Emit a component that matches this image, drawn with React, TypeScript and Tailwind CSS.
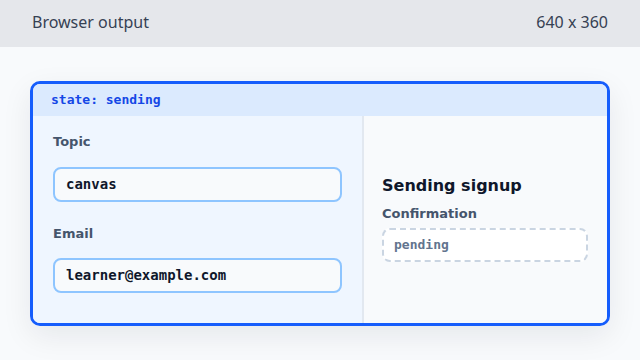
import React from "react";

const sans = "font-['DejaVu_Sans',sans-serif]";
const mono = "font-['DejaVu_Sans_Mono',monospace]";

function Field({ label, value, first }: { label: string; value: string; first?: boolean }) {
  return (
    <div className={first ? "" : "mt-6"}>
      <div className={`${sans} text-[13px] leading-4 font-bold text-slate-600`}>{label}</div>
      <div
        className={`${first ? "mt-[17px]" : "mt-4"} h-[35px] flex items-center px-[11px] border-2 border-blue-300 rounded-lg bg-slate-50 ${mono} text-[14px] font-bold text-slate-900`}
      >
        {value}
      </div>
    </div>
  );
}

export default function App() {
  return (
    <div className="w-[640px] h-[360px] flex flex-col bg-slate-50 overflow-hidden">
      <div className="h-[47px] shrink-0 flex items-center justify-between px-8 pb-1 bg-gray-200 font-['Noto_Sans',sans-serif] text-[16px] text-gray-700">
        <span>Browser output</span>
        <span>640 x 360</span>
      </div>
      <div className="flex-1 flex items-center px-[30px]">
        <div className="w-full border-[3px] border-blue-600 rounded-[10px] overflow-hidden shadow-[0_10px_30px_rgba(15,23,42,0.08)]">
          <div className={`h-8 flex items-center px-[18px] bg-blue-100 ${mono} text-[13px] font-bold text-blue-700`}>
            state: sending
          </div>
          <div className="flex">
            <div className="w-[331px] shrink-0 bg-blue-50 border-r-2 border-slate-200 px-5 pt-[18px] pb-[30px]">
              <Field label="Topic" value="canvas" first />
              <Field label="Email" value="learner@example.com" />
            </div>
            <div className="flex-1 bg-slate-50 px-[18px] pr-[19px] pb-1 flex flex-col justify-center">
              <div className={`${sans} text-[16px] leading-6 font-bold text-slate-900`}>Sending signup</div>
              <div className={`${sans} mt-2 text-[13px] leading-4 font-bold text-slate-600`}>Confirmation</div>
              <div
                className={`mt-1.5 h-[34px] flex items-center px-[10px] border-2 border-dashed border-slate-300 rounded-lg bg-white ${mono} text-[13px] font-bold text-slate-500`}
              >
                pending
              </div>
            </div>
          </div>
        </div>
      </div>
    </div>
  );
}
